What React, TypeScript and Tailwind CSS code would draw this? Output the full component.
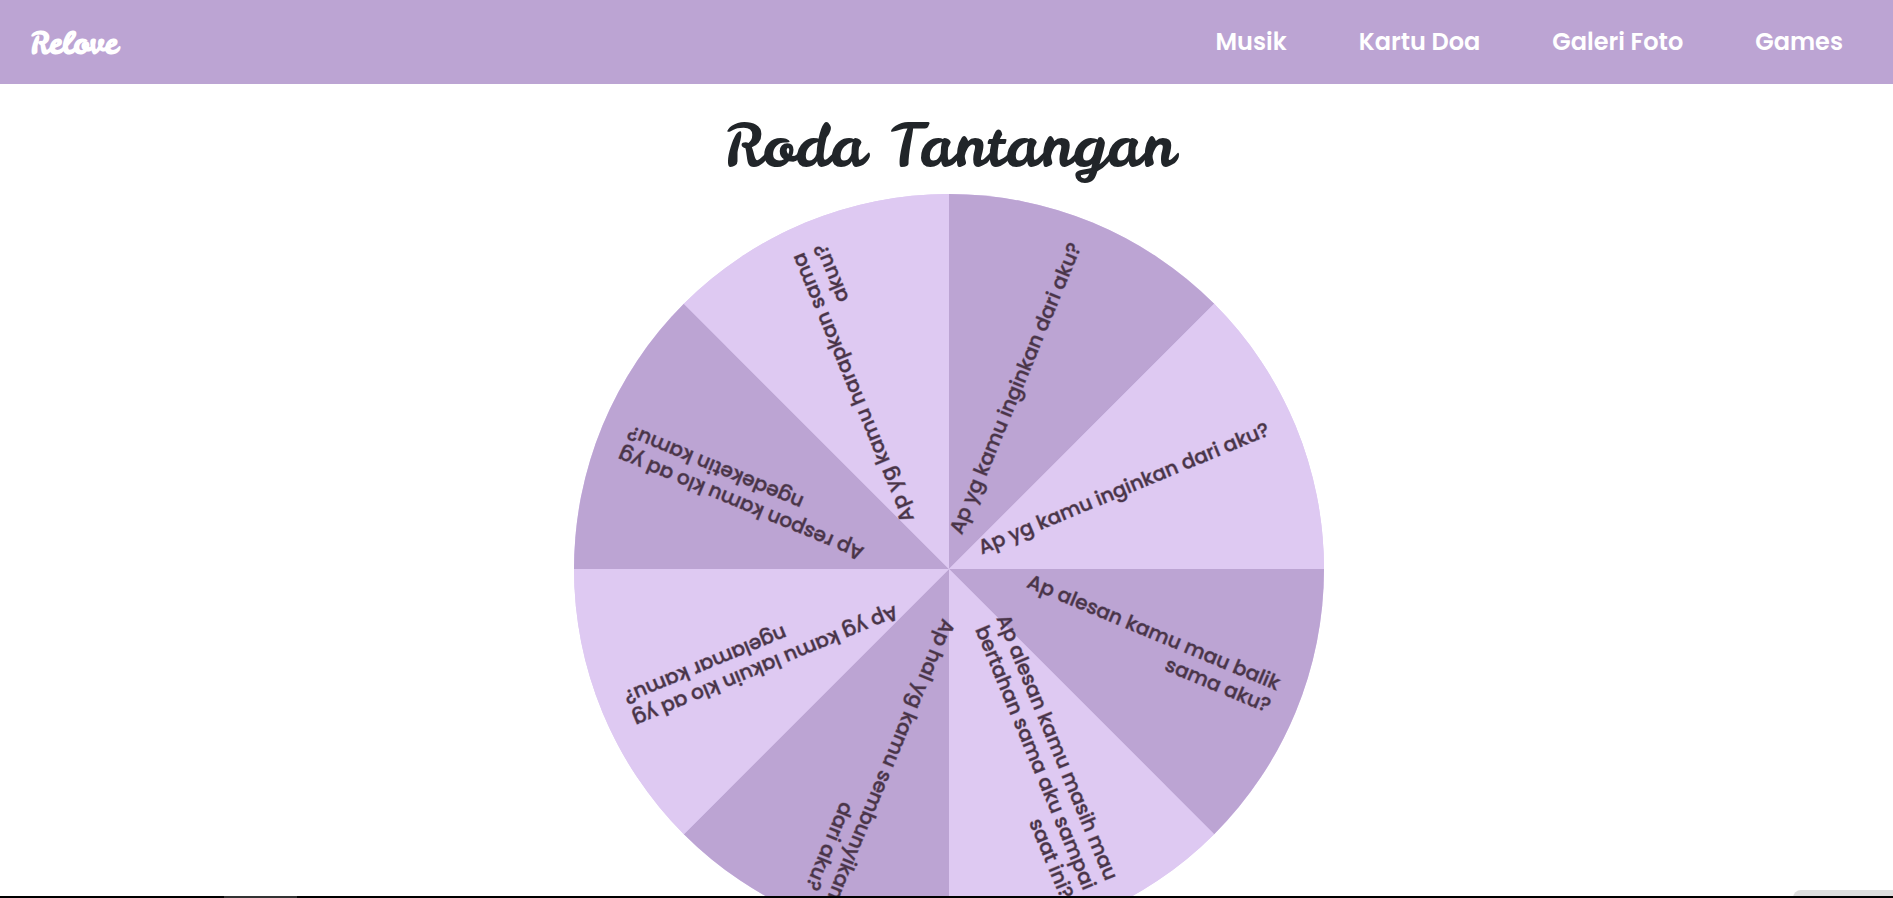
const LINKS = ["Musik", "Kartu Doa", "Galeri Foto", "Games"];

// Clockwise from the top, one entry per 45° slice.
const SLICES = [
  ["Ap yg kamu inginkan dari aku?"],
  ["Ap yg kamu inginkan dari aku?"],
  ["Ap alesan kamu mau balik", "sama aku?"],
  ["Ap alesan kamu masih mau", "bertahan sama aku sampai", "saat ini?"],
  ["Ap hal yg kamu sembunyikan", "dari aku?"],
  ["Ap yg kamu lakuin klo ad yg", "ngelamar kamu?"],
  ["Ap respon kamu klo ad yg", "ngedeketin kamu?"],
  ["Ap yg kamu harapkan sama", "akuu?"],
];

const RADIUS = 375;
const TEXT_END = 349;
const LINE_HEIGHT = 24;

// Corners of a slice that is centred on the x axis
const CORNER_X = RADIUS * Math.cos(Math.PI / 8);
const CORNER_Y = RADIUS * Math.sin(Math.PI / 8);
const SLICE_PATH = `M0 0L${CORNER_X} ${-CORNER_Y}A${RADIUS} ${RADIUS} 0 0 1 ${CORNER_X} ${CORNER_Y}Z`;

function Navbar() {
  return (
    <header className="flex h-[84px] shrink-0 items-center justify-between bg-[#bca4d3] pr-[50px] pl-[30px] text-white">
      <a href="#" className="pt-0.5 font-['Leckerli_One','Lato',cursive] text-3xl font-bold">
        Relove
      </a>
      <nav className="flex gap-[72px] font-['Poppins','Inter',sans-serif] text-2xl font-semibold">
        {LINKS.map((label) => (
          <a key={label} href="#">
            {label}
          </a>
        ))}
      </nav>
    </header>
  );
}

function Slice({ lines, index }: { lines: string[]; index: number }) {
  const first = -((lines.length - 1) * LINE_HEIGHT) / 2 - 1;
  return (
    <g transform={`rotate(${index * 45 - 67.5})`}>
      <path
        d={SLICE_PATH}
        className={index % 2 === 0 ? "fill-[#bca4d3]" : "fill-[#dec9f2]"}
      />
      {lines.map((line, i) => (
        <text
          key={line}
          x={TEXT_END}
          y={first + i * LINE_HEIGHT}
          textAnchor="end"
          className="stroke-[#4a3549]/40 stroke-1"
        >
          {line}
        </text>
      ))}
    </g>
  );
}

function Wheel() {
  return (
    <svg
      viewBox="-375 -375 750 750"
      role="img"
      aria-label="Roda Tantangan"
      className="w-[750px] max-w-full shrink-0 fill-[#4a3549] font-['Poppins','Inter',sans-serif] text-xl font-medium"
    >
      <circle r={RADIUS} className="fill-[#dec9f2]" />
      {SLICES.map((lines, i) => (
        <Slice key={i} lines={lines} index={i} />
      ))}
    </svg>
  );
}

export default function App() {
  return (
    <div className="flex h-screen flex-col overflow-hidden bg-white">
      <Navbar />
      <main className="flex flex-col items-center pt-6 pl-[5px]">
        <h1 className="mb-2.5 font-['Leckerli_One','Lato',cursive] text-[60px] leading-[76px] text-[#212529]">
          Roda Tantangan
        </h1>
        <Wheel />
      </main>
      <div className="fixed right-0 bottom-0 h-2 w-[100px] rounded-tl-lg bg-[#dedede]" />
      <div className="fixed inset-x-0 bottom-0 h-0.5 bg-black pl-56">
        <div className="h-full w-[73px] bg-[#333]" />
      </div>
    </div>
  );
}
